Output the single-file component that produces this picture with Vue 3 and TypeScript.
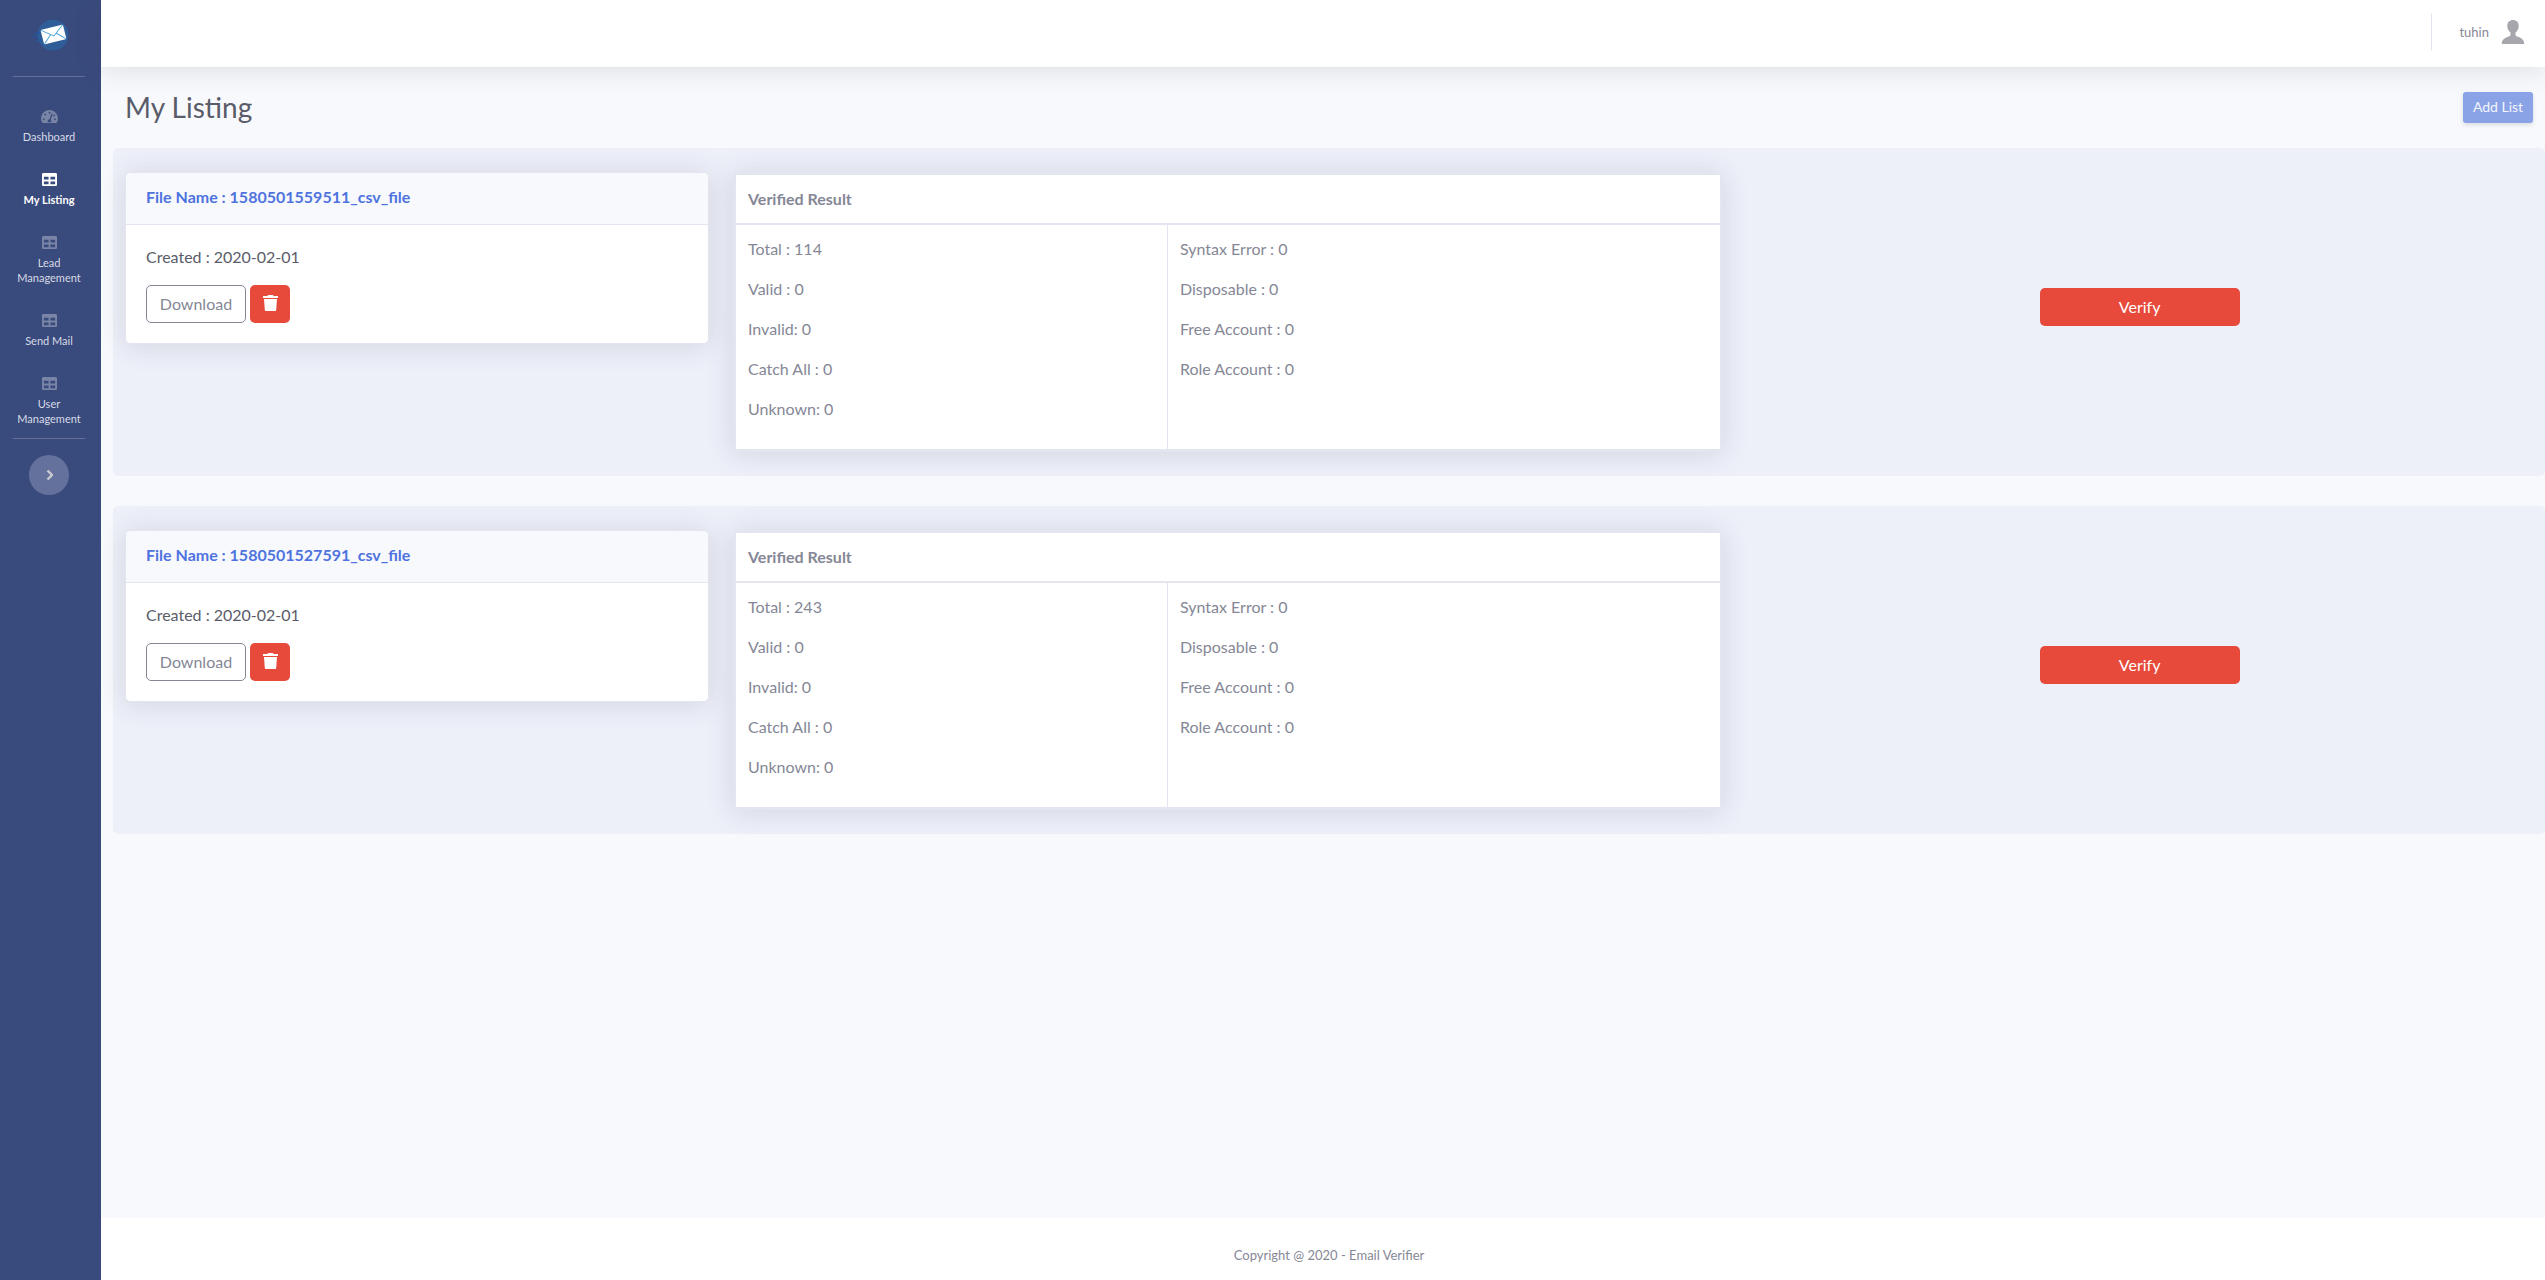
<script setup lang="ts">
interface NavItem {
  label: string
  icon: 'gauge' | 'table'
  active?: boolean
}

interface Listing {
  name: string
  created: string
  left: string[]
  right: string[]
}

const navItems: NavItem[] = [
  { label: 'Dashboard', icon: 'gauge' },
  { label: 'My Listing', icon: 'table', active: true },
  { label: 'Lead Management', icon: 'table' },
  { label: 'Send Mail', icon: 'table' },
  { label: 'User Management', icon: 'table' },
]

const makeListing = (name: string, created: string, total: number): Listing => ({
  name,
  created,
  left: [`Total : ${total}`, 'Valid : 0', 'Invalid: 0', 'Catch All : 0', 'Unknown: 0'],
  right: ['Syntax Error : 0', 'Disposable : 0', 'Free Account : 0', 'Role Account : 0'],
})

const listings: Listing[] = [
  makeListing('1580501559511_csv_file', '2020-02-01', 114),
  makeListing('1580501527591_csv_file', '2020-02-01', 243),
]
</script>

<template>
  <div class="app">
    <aside class="sidebar">
      <a href="#" class="brand" aria-label="Email Verifier">
        <svg width="42" height="32" viewBox="0 0 42 32">
          <circle cx="25" cy="16" r="15.5" fill="#2f5d98" />
          <path d="M0 18.500l10-2v1.500zM4 15l8-2.500v2zM5 21.500l9-1.500v1.500z" fill="#2259a6" />
          <g transform="rotate(-14 25.500 15.500)">
            <rect x="14" y="8" width="23" height="15" rx="1" fill="#fff" />
            <path d="M14.500 8.500l11 8.500 11-8.500M14.500 22.500l8-7.500M36.500 22.500l-8-7.500" fill="none" stroke="#4da3dc" stroke-width="1" />
          </g>
        </svg>
      </a>
      <hr class="divider" />
      <nav>
        <a v-for="item in navItems" :key="item.label" href="#" class="nav-link" :class="{ active: item.active }">
          <span class="nav-icon">
            <svg v-if="item.icon === 'gauge'" width="17" height="15" viewBox="0 0 576 512">
              <path fill="currentColor" fill-rule="evenodd" d="M288 32C129 32 0 161 0 320c0 53 14 102 39 145 6 10 16 15 27 15h444c11 0 21-5 27-15 25-43 39-92 39-145C576 161 447 32 288 32zm0 64c18 0 32 14 32 32s-14 32-32 32-32-14-32-32 14-32 32-32zM96 384c-18 0-32-14-32-32s14-32 32-32 32 14 32 32-14 32-32 32zm48-160c-18 0-32-14-32-32s14-32 32-32 32 14 32 32-14 32-32 32zm247-40l-62 184c14 12 23 29 23 48 0 12-3 22-9 32H233c-6-10-9-20-9-32 0-35 29-64 64-64l2 0 60-183c4-12 18-19 30-15s15 17 11 30zm25 21c5-8 15-13 26-13 18 0 32 14 32 32s-14 32-32 32c-17 0-31-14-32-30zM480 384c-18 0-32-14-32-32s14-32 32-32 32 14 32 32-14 32-32 32z" />
            </svg>
            <svg v-else width="15" height="15" viewBox="0 0 512 512">
              <path fill="currentColor" d="M464 32H48C21 32 0 54 0 80v352c0 26 21 48 48 48h416c27 0 48-22 48-48V80c0-26-21-48-48-48zM224 416H64v-96h160v96zm0-160H64v-96h160v96zm224 160H288v-96h160v96zm0-160H288v-96h160v96z" />
            </svg>
          </span>
          <span class="nav-text">{{ item.label }}</span>
        </a>
      </nav>
      <hr class="divider" />
      <button type="button" class="toggle" aria-label="Expand sidebar">
        <svg width="8" height="12" viewBox="0 0 8 12"><path d="M2.500 1.500L7 6l-4.500 4.500" fill="none" stroke="#c9cbd0" stroke-width="2.400" /></svg>
      </button>
    </aside>

    <div class="content">
      <header class="topbar">
        <a href="#" class="user">
          <span>tuhin</span>
          <svg width="24" height="24" viewBox="0 0 24 24"><path fill="#a7a6ad" d="M12 0C8.500 0 6.300 2.300 6.300 5.800c0 3 1.200 5.500 3.200 6.800v2.200c0 .9-.5 1.300-1.700 1.800C4 18 .8 19.500.8 24h22.400c0-4.500-3.200-6-7-7.400-1.200-.5-1.700-.9-1.700-1.800v-2.200c2-1.300 3.200-3.800 3.200-6.800C17.700 2.300 15.500 0 12 0z" /></svg>
        </a>
      </header>

      <main>
        <div class="heading">
          <h1>My Listing</h1>
          <button type="button" class="add">Add List</button>
        </div>

        <section v-for="list in listings" :key="list.name" class="listing">
          <div class="col-file">
            <article class="card">
              <h2 class="card-header">File Name : {{ list.name }}</h2>
              <div class="card-body">
                <p>Created : {{ list.created }}</p>
                <div class="actions">
                  <button type="button" class="download">Download</button>
                  <button type="button" class="delete" aria-label="Delete">
                    <svg width="15" height="16" viewBox="0 0 15 16"><path fill="#fff" d="M0 1h4.500l.5-1h5l.5 1H15v2H0zM1 4h13l-.8 11a1 1 0 0 1-1 1H2.800a1 1 0 0 1-1-1z" /></svg>
                  </button>
                </div>
              </div>
            </article>
          </div>
          <div class="col-result">
            <div class="result">
              <table>
                <thead>
                  <tr><th colspan="2">Verified Result</th></tr>
                </thead>
                <tbody>
                  <tr>
                    <td class="first"><p v-for="line in list.left" :key="line">{{ line }}</p></td>
                    <td><p v-for="line in list.right" :key="line">{{ line }}</p></td>
                  </tr>
                </tbody>
              </table>
            </div>
          </div>
          <div class="col-verify">
            <button type="button" class="verify">Verify</button>
          </div>
        </section>
      </main>

      <footer>Copyright @ 2020 - Email Verifier</footer>
    </div>
  </div>
</template>

<style>
body {
  margin: 0;
}
</style>

<style scoped>
* {
  box-sizing: border-box;
}
.app {
  display: flex;
  min-height: 100vh;
  background: #f8f9fc;
  color: #858796;
  font: 400 16px/24px Lato, sans-serif;
}
button {
  font: inherit;
  padding: 0;
  border: 0;
  border-radius: 5px;
  cursor: pointer;
}
a {
  color: inherit;
  text-decoration: none;
}
h1,
h2,
p {
  margin: 0;
}
.sidebar {
  flex: none;
  width: 101px;
  padding-right: 3px;
  background: #394a7d;
}
.brand {
  display: flex;
  justify-content: center;
  padding: 19px 0 0;
  height: 76px;
}
.divider {
  margin: 0 13px 16px;
  border: 0;
  border-top: 1px solid #646f9c;
}
.nav-link {
  display: block;
  padding: 12px 16px;
  text-align: center;
  color: #d7dbe5;
  font-size: 11px;
  line-height: 15px;
}
.nav-icon {
  display: flex;
  align-items: center;
  justify-content: center;
  height: 22px;
  margin-bottom: 2px;
  color: #7984a6;
}
.nav-text {
  display: block;
}
.nav-link.active {
  color: #fff;
  font-weight: 700;
}
.active .nav-icon {
  color: #fff;
}
.toggle {
  display: flex;
  align-items: center;
  justify-content: center;
  width: 40px;
  height: 40px;
  margin: 0 auto;
  border-radius: 50%;
  background: #64719c;
}
.content {
  flex: 1;
  min-width: 0;
  display: flex;
  flex-direction: column;
}
.topbar {
  display: flex;
  justify-content: flex-end;
  padding: 13px 20px 16px;
  background: #fff;
  box-shadow: 0 2px 28px rgba(58, 59, 69, 0.15);
}
.user {
  display: flex;
  align-items: center;
  gap: 12px;
  height: 38px;
  padding-left: 27px;
  border-left: 1px solid #e3e6f0;
  font-size: 13px;
}
main {
  flex: 1;
  padding-left: 12px;
}
.heading {
  display: flex;
  align-items: center;
  justify-content: space-between;
  padding: 23px 12px 24px;
}
h1 {
  color: #5a5c69;
  font-size: 28px;
  line-height: 34px;
  font-weight: 400;
}
.add {
  width: 70px;
  height: 31px;
  color: #f3f6fd;
  background: #8aa2e6;
  font-size: 14px;
  border-radius: 3px;
  box-shadow: 0 2px 4px rgba(58, 59, 69, 0.15);
}
.listing {
  display: flex;
  margin-bottom: 30px;
  border-radius: 5px;
  background: #edf0f9;
}
.listing > div {
  padding: 24px 12px;
}
.col-file {
  width: 25%;
}
.col-result {
  width: 41.6667%;
}
.listing > .col-verify {
  flex: 1;
  display: flex;
  align-items: center;
  justify-content: center;
  padding-bottom: 34px;
}
.card,
.result {
  border: 1px solid #e3e6f0;
  border-radius: 5px;
  background: #fff;
  box-shadow: 0 2px 28px rgba(58, 59, 69, 0.15);
}
.card-header {
  padding: 12px 20px 15px;
  border-bottom: 1px solid #e3e6f0;
  border-radius: 5px 5px 0 0;
  background: #f8f9fc;
  color: #4e73df;
  font-size: 16px;
  line-height: 24px;
  font-weight: 700;
}
.card-body {
  padding: 20px;
}
.card-body p {
  margin-bottom: 16px;
  color: #5a5c69;
}
.actions {
  display: flex;
  gap: 4px;
}
.download {
  width: 100px;
  height: 38px;
  border: 1px solid #858796;
  background: #fff;
  color: #858796;
}
.delete {
  display: flex;
  align-items: center;
  justify-content: center;
  width: 40px;
  height: 38px;
  padding-bottom: 3px;
  background: #e74a3b;
}
table {
  width: 100%;
  border: 2px solid #e3e6f0;
  border-right-width: 1px;
  border-spacing: 0;
}
th,
td {
  padding: 12px;
  text-align: left;
  vertical-align: top;
}
th {
  border-bottom: 2px solid #e3e6f0;
  font-weight: 700;
}
td p {
  margin-bottom: 16px;
}
.first {
  width: 432px;
  border-right: 1px solid #e3e6f0;
}
.verify {
  width: 200px;
  height: 38px;
  background: #e74a3b;
  color: #fff;
}
footer {
  padding: 30px 0 18px 12px;
  background: #fff;
  text-align: center;
  font-size: 13px;
  line-height: 14px;
}
</style>
